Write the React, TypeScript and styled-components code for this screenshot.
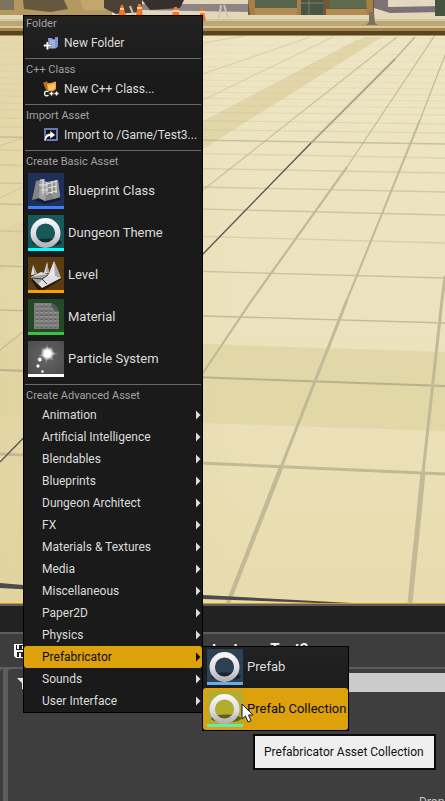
import React from "react";
import styled, { createGlobalStyle, css } from "styled-components";

const GlobalStyle = createGlobalStyle`
  *, *::before, *::after { box-sizing: border-box; }
  body { margin: 0; background: #3d3d3d; }
  button { font: inherit; color: inherit; }
`;

const Page = styled.div`
  position: relative;
  display: flex;
  flex-direction: column;
  height: 100vh;
  overflow: hidden;
  font-family: Roboto, sans-serif;
  font-size: 12px;
  color: #dcdcdc;
`;

const Viewport = styled.main`
  flex: 1;
  min-height: 0;
  border-bottom: 1px solid #d39b1b;
  background: #e9dfb8;
`;

const SceneSvg = styled.svg`
  display: block;
  width: 100%;
  height: 100%;
`;

const Browser = styled.section`
  flex: none;
  display: flex;
  flex-direction: column;
  height: 197px;
  border-top: 2px solid #5e5e5e;
  background: #3d3d3d;
`;

const TabStrip = styled.div`
  height: 26px;
  background: #222222;
`;

const Toolbar = styled.div`
  display: flex;
  align-items: center;
  gap: 157px;
  height: 37px;
  padding: 0 14px;
  border-top: 2px solid #5e5e5e;
  border-bottom: 2px solid #5e5e5e;
  background: #3d3d3d;
`;

const ToolButton = styled.button`
  display: flex;
  padding: 0;
  border: 0;
  background: none;
`;

const Breadcrumbs = styled.nav`
  display: flex;
  gap: 32px;
  padding-bottom: 4px;
  font-size: 15px;
  line-height: 20px;
  font-weight: 700;
  color: #f0f0f0;

  a { color: inherit; text-decoration: none; }
`;

const Panels = styled.div`
  flex: 1;
  display: grid;
  grid-template-columns: 3px 1fr;
  gap: 5px;
  background: #5e5e5e;
`;

const Panel = styled.div`
  display: flex;
  flex-direction: column;
  justify-content: space-between;
  border-radius: 3px 0 0 0;
  background: #3e3e3e;
`;

const FilterBar = styled.div`
  display: flex;
  align-items: center;
  gap: 60px;
  padding: 4px 0 0 9px;
`;

const SearchBox = styled.input`
  flex: 1;
  min-width: 0;
  height: 19px;
  border: 0;
  border-radius: 0;
  background: #cbcbcb;
`;

const DropHint = styled.p`
  align-self: flex-end;
  width: 26px;
  height: 6px;
  margin: 0;
  line-height: 15px;
  white-space: nowrap;
  color: #c4c4c4;
`;

const popup = css`
  position: absolute;
  border: 1px solid #000;
  background: linear-gradient(#222222, #1a1a1a 60px);
`;

const Menu = styled.div`
  ${popup}
  left: 23px;
  top: 15px;
  width: 180px;
`;

const Section = styled.section`
  margin: 0 1px;
  padding-bottom: 4px;

  & + & {
    padding-top: 3px;
    border-top: 1px solid #6a6a6a;
  }
  &:last-child { padding-bottom: 0; }
`;

const Heading = styled.h2`
  margin: 0 0 0 1px;
  font-size: 11px;
  line-height: 16px;
  font-weight: 400;
  color: #a2a2a2;
`;

const Item = styled.button<{ $kind: "action" | "asset" | "group"; $active?: boolean }>`
  display: flex;
  align-items: center;
  width: calc(100% + 2px);
  margin: 0 -1px;
  border: 0;
  border-radius: 3px;
  text-align: left;
  white-space: nowrap;
  background: ${(p) => (p.$active ? "#dda20b" : "transparent")};
  color: ${(p) => (p.$active ? "#0c0a04" : "#dcdcdc")};

  svg { flex: none; }

  ${(p) => p.$kind === "action" && css`
    gap: 5px;
    height: 22px;
    padding: 0 0 0 19px;
  `}
  ${(p) => p.$kind === "asset" && css`
    gap: 4px;
    height: 42px;
    padding: 0 4px;
    font-size: 13px;
  `}
  ${(p) => p.$kind === "group" && css`
    justify-content: space-between;
    height: 22px;
    padding: 0 1px 0 18px;
  `}
`;

const AssetLabel = styled.span`
  padding-bottom: 2px;
`;

const GroupSlot = styled.div`
  position: relative;
`;

const Submenu = styled.div`
  ${popup}
  left: calc(100% + 1px);
  top: 0;
  width: 147px;
  border-top: 0;
  box-shadow: inset 0 1px 0 #000;

  ${Item} {
    width: 100%;
    margin: 0;
  }
`;

const Thumb = styled.span<{ $back: string; $bar: string }>`
  flex: none;
  width: 36px;
  height: 36px;
  border-bottom: 3px solid ${(p) => p.$bar};
  background: ${(p) => p.$back};

  svg { display: block; }
`;

const Tooltip = styled.div`
  position: absolute;
  left: 50px;
  top: 88px;
  padding: 8px 10px 8px 9px;
  border: 2px solid #0b0b0b;
  background: #efefef;
  line-height: 16px;
  white-space: nowrap;
  color: #111111;
`;

const Pointer = styled.svg`
  position: absolute;
  left: 38px;
  top: 57px;
`;

const groundRows = [
  [30, 39, 0.1], [43, 47, 0.1], [50, 55, 0.1], [57, 62, 0.1], [64, 70, 0.2], [71, 76, 0.15],
  [78, 83, 0.15], [84, 89, 0.15], [90, 95, 0.2], [96, 101, 0.2], [103, 108, 0.2], [110, 115, 0.25],
  [118, 124, 0.3], [127, 133, 0.3], [137, 144, 0.7], [150, 158, 0.3], [165, 173, 0.4],
  [183, 192, 0.5], [204, 215, 0.6], [231, 243, 0.4], [266, 278, 0.7],
];

function Scene() {
  return (
    <SceneSvg viewBox="0 0 445 603" preserveAspectRatio="none" aria-hidden="true">
      <defs>
        <linearGradient id="floor" x1="0" y1="0" x2="0" y2="1">
          <stop offset="0" stopColor="#eee5c4" />
          <stop offset="0.55" stopColor="#ece2bd" />
          <stop offset="1" stopColor="#e8dcae" />
        </linearGradient>
        <linearGradient id="side" x1="0" y1="0" x2="1" y2="0">
          <stop offset="0" stopColor="#d8c88a" stopOpacity="0.45" />
          <stop offset="1" stopColor="#d8c88a" stopOpacity="0" />
        </linearGradient>
      </defs>
      <rect width="445" height="603" fill="url(#floor)" />
      <rect y="36" width="240" height="567" fill="url(#side)" />
      <path d="M365 37H382L203 149L23 262L0 272V231L23 220L203 123Z" fill="#dfd4a3" opacity="0.85" />
      <path d="M0 337L203 344L445 352V431L203 423L0 415Z" fill="#ded3a0" opacity="0.7" />
      <g stroke="#b9b08e" fill="none">
        {groundRows.map(([a, b, o]) => (
          <path key={a} d={`M0 ${a}L445 ${b}`} opacity={o} strokeWidth={a > 130 ? 1.4 : 1} />
        ))}
        <path d="M0 310L445 323" strokeWidth="1.4" opacity="0.8" />
        <path d="M0 370L445 386" strokeWidth="2" />
        <path d="M0 454L445 474" strokeWidth="3" stroke="#c3b997" />
        <path d="M250 35L203 43M310 37L203 74L0 146M333 37L203 100L0 198M358 40L203 122" strokeWidth="1" opacity="0.45" />
        <path d="M397 37L203 190L0 350" strokeWidth="1.2" opacity="0.7" />
        <path d="M435 35L347 167" strokeWidth="1.2" opacity="0.8" />
        <path d="M347 167L252 300L203 373L50 603" strokeWidth="2.2" stroke="#c2b997" />
        <path d="M445 55L420 120" strokeWidth="1.2" opacity="0.8" />
        <path d="M420 120L347 300" strokeWidth="2" stroke="#c2b997" />
        <path d="M347 300L282 465" strokeWidth="3" stroke="#c3b997" />
        <path d="M282 465L228 603" strokeWidth="4.4" stroke="#c3b997" />
        <path d="M445 276L442 300L423 473" strokeWidth="3" stroke="#c3b997" />
        <path d="M423 473L410 603" strokeWidth="5" stroke="#c3b997" />
      </g>
      <path d="M415 37L395 59" stroke="#b9ae98" strokeWidth="1.2" />
      <path d="M395 59L311 143" stroke="#ada28d" strokeWidth="1.8" />
      <path d="M311 143L203 254L0 462" stroke="#5d5a55" strokeWidth="1.4" fill="none" />
      <path d="M0 583L23 585L203 595L352 603H318L203 599L0 588Z" fill="#4b4b4b" />

      <rect width="445" height="20" fill="#e3d6bb" />
      <path d="M140 4H250V12L140 10Z" fill="#8b8585" />
      <path d="M374 0H445V12L390 13L374 8Z" fill="#7b7176" />
      <path d="M388 0H445V6L388 7Z" fill="#e4d8c0" />
      <path d="M0 0H112V15H0Z" fill="#b39860" />
      <path d="M0 0H14V10H0Z" fill="#7d745f" />
      <path d="M23 0H64L68 9L50 12L24 9Z" fill="#66583f" />
      <path d="M80 0H112V10H84Z" fill="#c3a66d" />
      <path d="M104 0H142V12L116 14L104 8Z" fill="#4b4035" />
      <path d="M142 0H184L180 8L150 10Z" fill="#352f2d" />
      <rect x="248" width="126" height="15" fill="#6f5938" />
      <rect x="254" width="44" height="8" fill="#56644c" />
      <rect x="301" width="22" height="15" fill="#465747" />
      <path d="M309 0V15M301 3H323" stroke="#8b7c56" strokeWidth="1" />
      <rect x="330" width="36" height="8" fill="#5c6b4e" />
      <path d="M250 8H298V15H252ZM326 9H372V15H326Z" fill="#b18c50" />
      <path d="M248 0H255V15H250ZM366 0H373V15H367ZM297 0H301V15H297Z" fill="#a58048" />
      <rect x="435" width="10" height="16" fill="#46533e" />
      <rect y="20" width="445" height="8" fill="#b9a777" />
      <rect y="19" width="445" height="2" fill="#d4c69b" />
      <rect y="26" width="445" height="2" fill="#d8c897" />
      <rect y="28" width="445" height="4" fill="#a1854c" />
      <rect y="31" width="445" height="4" fill="#59441f" />
      <rect y="35" width="445" height="1" fill="#a38f61" />
      <path d="M369 12H374L375 23L378 25H366L369 22Z" fill="#77735c" />
      <g fill="#f4771c">
        <path d="M121 5H123L126 16H118ZM138 4H141L143 16H136ZM174 7H177L180 16H172ZM201 7H203L206 21H199Z" />
      </g>
      <path d="M120 9H124M137 8H142M173 11H179M200 12H205" stroke="#f6eee2" strokeWidth="1.5" />
      <path d="M221 5L219 18M224 5L228 18M130 6L134 16" stroke="#cfc6b6" strokeWidth="2" />
    </SceneSvg>
  );
}

function SaveIcon() {
  return (
    <svg width="14" height="14" viewBox="0 0 14 14" aria-hidden="true">
      <path d="M0 0H14V14H2L0 12Z" fill="#f4f4f4" />
      <path d="M2 1H12V6H2ZM3 8H12V13H3Z" fill="#222" />
      <path d="M3 1H5V5H3ZM8 2H10V5H8ZM5 9H7V13H5Z" fill="#f4f4f4" />
    </svg>
  );
}

function FolderIcon() {
  return (
    <svg width="16" height="16" viewBox="0 0 16 16" aria-hidden="true">
      <path d="M5 3H9L10 4.500H12V12L5 13Z" fill="#8b9bc9" />
      <path d="M7 5L12 4.500L12.500 2L15 2.500V11.500L12 13.500H6Z" fill="#9fb0e2" />
      <path d="M12 4.500L12.500 2L15 2.500V11.500L12 13.500Z" fill="#7f93cd" />
      <path d="M3 6.500H6V9H8.500V12H6V14.500H3V12H0.500V9H3Z" fill="#222" />
      <path d="M4.500 7V14.500M0.800 10.500H8.500" stroke="#fff" strokeWidth="2" />
    </svg>
  );
}

function ClassIcon() {
  return (
    <svg width="16" height="16" viewBox="0 0 16 16" aria-hidden="true">
      <path d="M0 1.500L4 0.500L5 2H9V8L3 9Z" fill="#b9701f" />
      <path d="M4 3L13 0.500V8L10 10.500H5Z" fill="#f3a63c" />
      <path d="M5 5L12 3V7L9 9H6Z" fill="#ffc263" />
      <path d="M1 10H16V15.500H1Z" fill="#222" />
      <path d="M5.500 10.700C3.500 9.500 1.500 10.500 1.500 12.500S3.500 15.500 5.500 14.200M6.500 12.500H10.500M8.500 10.500V14.500M11.500 12.500H15.500M13.500 10.500V14.500" stroke="#fff" strokeWidth="1.300" fill="none" />
    </svg>
  );
}

function ImportIcon() {
  return (
    <svg width="16" height="16" viewBox="0 0 16 16" aria-hidden="true">
      <rect x="2" y="2" width="12" height="11" fill="#10131c" stroke="#7794dc" strokeWidth="1.600" />
      <path d="M1 14C1 9 3 6.500 7 6.500V3.500L12.500 8L7 12V9.500C4.500 9.500 3 11 3.300 14Z" fill="#fff" stroke="#111" strokeWidth="0.600" />
    </svg>
  );
}

function RingArt({ id }: { id: string }) {
  return (
    <svg width="36" height="33" viewBox="0 0 36 33" aria-hidden="true">
      <defs>
        <linearGradient id={id} x1="0" y1="0" x2="0" y2="1">
          <stop offset="0" stopColor="#f6f4f8" />
          <stop offset="0.6" stopColor="#dcdae0" />
          <stop offset="1" stopColor="#b5b2b8" />
        </linearGradient>
      </defs>
      <ellipse cx="19" cy="27.500" rx="15" ry="4" fill="#000" opacity="0.45" />
      <circle cx="17.500" cy="18" r="12.300" fill="none" stroke={`url(#${id})`} strokeWidth="5.400" />
    </svg>
  );
}

function BlueprintArt() {
  return (
    <svg width="36" height="33" viewBox="0 0 36 33" aria-hidden="true">
      <path d="M5 27L17 31L33 27L31 23Z" fill="#0c1430" opacity="0.7" />
      <path d="M8 8L12 7L19 9L30 7L32 24L26 26L17 28L11 25L4 27Z" fill="#858585" />
      <path d="M12 7L19 9L17 28L11 25Z" fill="#a3a3a3" />
      <path d="M19 9L30 7L32 24L26 26Z" fill="#929292" />
      <path d="M12 7H17M15 6V21M11 12H19M13 17H20M19 9V22M19 11L29 8M20 15L29 13M20 20L29 18M24 8V21M28 7V20" stroke="#e8e8e8" strokeWidth="1" fill="none" />
    </svg>
  );
}

function LevelArt() {
  return (
    <svg width="36" height="33" viewBox="0 0 36 33" aria-hidden="true">
      <path d="M3 23L14 17L34 22L16 33H10Z" fill="#241b0e" />
      <path d="M3 20L13 15L33 21L14 31Z" fill="#dfdfdf" />
      <path d="M3 20L12 18L21 17L14 23L10 27Z" fill="#a4a4a4" />
      <path d="M3 18L5 8L9 17Z M16 16L19 5L21 16Z M20 19L26 4L33 21Z" fill="#e6e6e6" />
      <path d="M5 8L9 17L6 17Z M19 5L21 16L18 15Z M26 4L33 21L27 19Z" fill="#a8a8a8" />
      <path d="M4 21L14 22L20 18M14 22L19 27" stroke="#3a3a3a" strokeWidth="1" fill="none" />
    </svg>
  );
}

function MaterialArt() {
  return (
    <svg width="36" height="33" viewBox="0 0 36 33" aria-hidden="true">
      <defs>
        <pattern id="weave" x="7" y="6" width="4.500" height="4.200" patternUnits="userSpaceOnUse">
          <rect width="4.500" height="4.200" fill="#7c7c7c" />
          <ellipse cx="2.200" cy="2" rx="1.300" ry="0.900" fill="#5a5a5a" />
          <path d="M1 3.300H3.600" stroke="#b4b4b4" strokeWidth="0.800" />
        </pattern>
      </defs>
      <path d="M6 4H23C26 6 30 8 31 13L31 30H6Z" fill="url(#weave)" />
      <path d="M23 4C28 5 30 8 31 13C27 12 24 10 23 4Z" fill="#555" />
    </svg>
  );
}

function ParticleArt() {
  return (
    <svg width="36" height="33" viewBox="0 0 36 33" aria-hidden="true">
      <defs>
        <radialGradient id="glow">
          <stop offset="0" stopColor="#fff" />
          <stop offset="0.45" stopColor="#fff" />
          <stop offset="1" stopColor="#fff" stopOpacity="0" />
        </radialGradient>
      </defs>
      <path d="M19 3L20.500 9L25 6L23 10.500L30 13L23 14.500L26 20L20.500 16.500L18 22L17 16L11 15L16 12L13 7L18 9Z" fill="#fff" opacity="0.3" />
      <circle cx="19.500" cy="12.500" r="7" fill="url(#glow)" />
      <circle cx="11.800" cy="18.500" r="2.600" fill="url(#glow)" />
      <circle cx="10" cy="25" r="2.200" fill="url(#glow)" />
      <circle cx="14.500" cy="30.500" r="1.700" fill="url(#glow)" />
    </svg>
  );
}

function Arrow() {
  return (
    <svg width="5" height="10" viewBox="0 0 5 10" aria-hidden="true">
      <path d="M0 0.500L4.500 5L0 9.500Z" fill="currentColor" />
    </svg>
  );
}

const actions = [
  { heading: "Folder", label: "New Folder", icon: <FolderIcon /> },
  { heading: "C++ Class", label: "New C++ Class...", icon: <ClassIcon /> },
  { heading: "Import Asset", label: "Import to /Game/Test3...", icon: <ImportIcon /> },
];

const basicAssets = [
  { label: "Blueprint Class", back: "#1f2f57", bar: "#3f7cff", art: <BlueprintArt /> },
  { label: "Dungeon Theme", back: "#17595a", bar: "#00ffff", art: <RingArt id="ring-theme" /> },
  { label: "Level", back: "#5a3c10", bar: "#ff9c00", art: <LevelArt /> },
  { label: "Material", back: "#234a24", bar: "#40c040", art: <MaterialArt /> },
  {
    label: "Particle System",
    back: "radial-gradient(#666666, #4c4c4c)",
    bar: "#ffffff",
    art: <ParticleArt />,
  },
];

const prefabAssets = [
  { label: "Prefab", back: "#2c4152", bar: "#62acec", art: <RingArt id="ring-prefab" /> },
  { label: "Prefab Collection", back: "#b3ad2f", bar: "#62ecac", art: <RingArt id="ring-collection" />, active: true },
];

const groups = [
  "Animation", "Artificial Intelligence", "Blendables", "Blueprints", "Dungeon Architect", "FX",
  "Materials & Textures", "Media", "Miscellaneous", "Paper2D", "Physics", "Prefabricator",
  "Sounds", "User Interface",
];

type Asset = { label: string; back: string; bar: string; art: React.ReactNode; active?: boolean };

function AssetItem({ label, back, bar, art, active }: Asset) {
  return (
    <Item role="menuitem" $kind="asset" $active={active}>
      <Thumb $back={back} $bar={bar}>{art}</Thumb>
      <AssetLabel>{label}</AssetLabel>
    </Item>
  );
}

export default function App() {
  return (
    <Page>
      <GlobalStyle />
      <Viewport><Scene /></Viewport>

      <Browser aria-label="Content Browser">
        <TabStrip />
        <Toolbar>
          <ToolButton aria-label="Save All"><SaveIcon /></ToolButton>
          <Breadcrumbs aria-label="Path">
            <a href="#content">Content</a>
            <a href="#test3">Test3</a>
          </Breadcrumbs>
        </Toolbar>
        <Panels>
          <Panel />
          <Panel>
            <FilterBar>
              <ToolButton aria-label="Filters">
                <svg width="14" height="12" viewBox="0 0 14 12" aria-hidden="true">
                  <path d="M0 1H14L9 6V12H5V6Z" fill="#e8e8e8" />
                </svg>
              </ToolButton>
              <SearchBox aria-label="Search Test3" />
            </FilterBar>
            <DropHint>Drop</DropHint>
          </Panel>
        </Panels>
      </Browser>

      <Menu role="menu">
        {actions.map((a) => (
          <Section key={a.heading}>
            <Heading>{a.heading}</Heading>
            <Item role="menuitem" $kind="action">{a.icon}<span>{a.label}</span></Item>
          </Section>
        ))}
        <Section>
          <Heading>Create Basic Asset</Heading>
          {basicAssets.map((a) => <AssetItem key={a.label} {...a} />)}
        </Section>
        <Section>
          <Heading>Create Advanced Asset</Heading>
          {groups.map((label) => {
            const open = label === "Prefabricator";
            return (
              <GroupSlot key={label}>
                <Item role="menuitem" aria-haspopup="menu" aria-expanded={open} $kind="group" $active={open}>
                  <span>{label}</span>
                  <Arrow />
                </Item>
                {open && (
                  <Submenu role="menu">
                    {prefabAssets.map((a) => <AssetItem key={a.label} {...a} />)}
                    <Tooltip role="tooltip">Prefabricator Asset Collection</Tooltip>
                    <Pointer width="14" height="20" viewBox="0 0 14 20" aria-hidden="true">
                      <path d="M1 1V16L4.500 13L7 19L10 17.700L7.500 12H12Z" fill="#fff" stroke="#111" strokeWidth="1" />
                    </Pointer>
                  </Submenu>
                )}
              </GroupSlot>
            );
          })}
        </Section>
      </Menu>
    </Page>
  );
}
